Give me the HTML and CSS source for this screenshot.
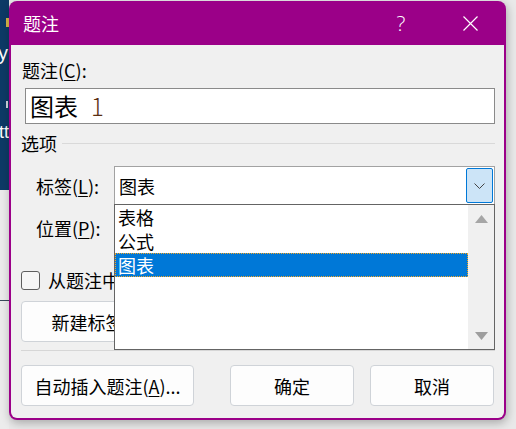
FILE: index.html
```html
<!DOCTYPE html>
<html lang="zh-CN">
<head>
<meta charset="utf-8">
<title>题注</title>
<link rel="stylesheet" href="styles.css">
</head>
<body>
<div class="desk">
  <div class="desk-icon"></div>
  <div class="desk-y">y</div>
  <div class="desk-bar"></div>
  <div class="desk-t">tt</div>
</div>
<div class="dialog">
  <div class="titlebar">
    <span class="title">题注</span>
    <span class="tb-btn help">?</span>
    <span class="tb-btn close">
      <svg width="15" height="15" viewBox="0 0 15 15"><path d="M0.5 0.5 L14.5 14.5 M14.5 0.5 L0.5 14.5" stroke="#fff" stroke-width="1.2" fill="none"/></svg>
    </span>
  </div>
  <div class="body">
    <div class="lbl-caption">题注(<u>C</u>):</div>
    <div class="input"><span>图表</span><span class="num">1</span></div>
    <div class="section"><span>选项</span><span class="rule"></span></div>
    <div class="field-row">
      <span class="field-label">标签(<u>L</u>):</span>
      <div class="combo">
        <span class="combo-text">图表</span>
        <span class="combo-btn">
          <svg width="11" height="6" viewBox="0 0 11 6"><polyline points="0.5,0.5 5.5,5.5 10.5,0.5" stroke="#444" stroke-width="1" fill="none"/></svg>
        </span>
      </div>
    </div>
    <div class="field-row pos-row">
      <span class="field-label">位置(<u>P</u>):</span>
    </div>
    <div class="check-row">
      <span class="checkbox"></span>
      <span class="check-text">从题注中排除标签(<u>E</u>)</span>
    </div>
    <div class="btn-row first">
      <button class="btn wide">新建标签(<u>N</u>)...</button>
      <button class="btn mid">删除标签(<u>D</u>)</button>
      <button class="btn mid">编号(<u>U</u>)...</button>
    </div>
    <div class="sep"></div>
    <div class="btn-row">
      <button class="btn wide">自动插入题注(<u>A</u>)...</button>
      <button class="btn mid push">确定</button>
      <button class="btn mid">取消</button>
    </div>

    <div class="dropdown">
      <div class="items">
        <div class="item">表格</div>
        <div class="item">公式</div>
        <div class="item selected">图表</div>
      </div>
      <div class="scrollbar">
        <svg width="13" height="8" viewBox="0 0 13 8"><polygon points="6.5,0 13,8 0,8" fill="#a6a6a6"/></svg>
        <svg width="13" height="8" viewBox="0 0 13 8"><polygon points="0,0 13,0 6.5,8" fill="#9e9e9e"/></svg>
      </div>
    </div>
  </div>
</div>
</body>
</html>
```

FILE: styles.css
```css
html, body {
  margin: 0;
  padding: 0;
}
body {
  width: 516px;
  height: 429px;
  overflow: hidden;
  background: #e9e9e9;
  display: flex;
  align-items: flex-start;
  font-family: "Noto Sans CJK SC", "Noto Sans", sans-serif;
  font-size: 18px;
  color: #000;
}
.desk {
  width: 9px;
  height: 429px;
  flex: none;
  overflow: hidden;
  background:
    linear-gradient(#0d3a66, #0d3a66) 0 0 / 9px 190px no-repeat,
    linear-gradient(#3b4b5c, #3b4b5c) 0 300px / 9px 1px no-repeat,
    #ececec;
  color: #fff;
  font-family: "Liberation Sans", sans-serif;
  font-size: 20px;
  line-height: 20px;
}
.desk-icon {
  width: 4px;
  height: 9px;
  margin: 18px 0 0 6px;
  background: #d8b64a;
}
.desk-y {
  margin-top: 16px;
  margin-left: -2px;
}
.desk-bar {
  width: 2px;
  height: 7px;
  margin: 38px 0 0 6px;
  background: #cfd6de;
}
.desk-t {
  margin-top: 14px;
  margin-left: -1px;
  font-size: 18px;
}
.dialog {
  margin-top: 1px;
  width: 497px;
  height: 419px;
  box-sizing: border-box;
  background: #9b0088;
  border-radius: 8px;
  padding: 0 2px 2px 2px;
  display: flex;
  flex-direction: column;
  box-shadow: 1px 3px 10px rgba(0, 0, 0, 0.28);
  flex: none;
}
.titlebar {
  height: 44px;
  display: flex;
  align-items: center;
  color: #fff;
  padding-left: 12px;
  flex: none;
}
.title {
  font-size: 18px;
  line-height: 24px;
  flex: 1;
}
.tb-btn {
  width: 68px;
  height: 44px;
  display: flex;
  align-items: center;
  justify-content: center;
}
.help {
  font-family: "Open Sans", "Noto Sans", sans-serif;
  font-weight: 300;
  font-size: 21px;
  padding-right: 2px;
  box-sizing: border-box;
  padding-bottom: 1px;
}
.close svg {
  display: block;
}
.body {
  flex: 1;
  background: #f0f0f0;
  border-radius: 0 0 6px 6px;
  position: relative;
}
u {
  text-decoration: underline;
  text-underline-offset: 2px;
  text-decoration-thickness: 1px;
}
.lbl-caption {
  margin: 13px 0 0 11px;
  line-height: 24px;
}
.input {
  margin: 6px 9px 0 14px;
  height: 36px;
  box-sizing: border-box;
  border: 1px solid #8a8a8a;
  background: #fff;
  display: flex;
  align-items: center;
  padding-left: 4px;
  font-size: 24px;
  line-height: 30px;
}
.input .num {
  margin-left: 13px;
  color: #5a2e12;
  font-family: "Noto Sans CJK SC", sans-serif;
  font-weight: 300;
}
.section {
  margin-top: 7px;
  padding-left: 10px;
  display: flex;
  align-items: center;
  line-height: 24px;
}
.rule {
  flex: 1;
  height: 1px;
  background: #d9d9d9;
  margin: 0 9px 0 5px;
}
.field-row {
  margin-top: 11px;
  padding-left: 25px;
  display: flex;
  align-items: center;
  line-height: 24px;
}
.field-label {
  width: 78px;
  flex: none;
}
.combo {
  width: 381px;
  height: 39px;
  box-sizing: border-box;
  border: 1px solid #a2a2a2;
  border-bottom: none;
  background: #fff;
  display: flex;
  align-items: flex-start;
  justify-content: space-between;
  padding: 1px 1px 0 4px;
}
.combo-text {
  line-height: 36px;
}
.combo-btn {
  width: 27px;
  height: 35px;
  box-sizing: border-box;
  border: 1px solid #0078d7;
  border-radius: 2px;
  background: #cce4f7;
  display: flex;
  align-items: center;
  justify-content: center;
}
.combo-btn svg {
  display: block;
}
.pos-row {
  margin-top: 11px;
}
.check-row {
  margin-top: 28px;
  padding-left: 10px;
  height: 24px;
  display: flex;
  align-items: center;
  line-height: 24px;
}
.checkbox {
  width: 19px;
  height: 19px;
  box-sizing: border-box;
  border: 1px solid #5f5f5f;
  border-radius: 3px;
  background: #f7f7f7;
  flex: none;
}
.check-text {
  margin-left: 8px;
  white-space: nowrap;
}
.btn-row {
  margin-top: 14px;
  padding: 0 10px;
  display: flex;
  gap: 16px;
}
.btn-row.first {
  margin-top: 9px;
}
.btn {
  height: 41px;
  box-sizing: border-box;
  border: 1px solid #cfd3d8;
  border-radius: 4px;
  background: #fdfdfd;
  font-family: "Noto Sans CJK SC", sans-serif;
  font-size: 18px;
  color: #000;
  padding: 0;
  line-height: 24px;
  white-space: nowrap;
}
.btn.wide {
  width: 173px;
}
.btn.mid {
  width: 124px;
}
.btn.push {
  margin-left: auto;
}
.sep {
  height: 1px;
  background: #d6d6d6;
  margin: 8px 9px 0 10px;
}
.dropdown {
  position: absolute;
  left: 103px;
  top: 159px;
  width: 381px;
  height: 146px;
  box-sizing: border-box;
  border: 1px solid #646464;
  background: #fff;
  display: flex;
}
.items {
  flex: 1;
}
.item {
  height: 24px;
  line-height: 24px;
  padding-left: 3px;
}
.item.selected {
  background: #0078d7;
  color: #fff;
  outline: 1px dotted #f5a623;
  outline-offset: -1px;
}
.scrollbar {
  width: 26px;
  background: #f0f0f0;
  display: flex;
  flex-direction: column;
  align-items: center;
  justify-content: space-between;
  padding: 10px 0 9px;
  box-sizing: border-box;
}
.scrollbar svg {
  display: block;
}
```
